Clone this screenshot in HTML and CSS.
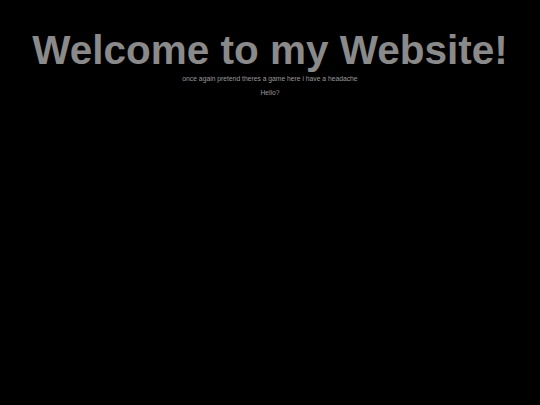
FILE: index.html
```html
<!DOCTYPE html>
<html>
<head>
<meta charset="utf-8">
<link rel="stylesheet" href="styles.css">
</head>
<body>
<main class="page">
  <h1 class="title">Welcome to my Website!</h1>
  <p class="tagline">once again pretend theres a game here i have a headache</p>
  <p class="hello">Hello?</p>
</main>
</body>
</html>
```

FILE: styles.css
```css
html, body {
  margin: 0;
  padding: 0;
  background: #000;
}
.page {
  display: flex;
  flex-direction: column;
  align-items: center;
  padding-top: 27px;
  font-family: "Liberation Sans", Arial, sans-serif;
  color: #8c8c8c;
  text-align: center;
}
.title {
  margin: 0;
  font-size: 40.5px;
  font-weight: bold;
  line-height: 46px;
  color: #8a8a8a;
}
.tagline {
  margin: 1px 0 0;
  font-size: 6.75px;
  line-height: 9px;
  color: #9a9a9a;
}
.hello {
  margin: 5px 0 0;
  font-size: 6.75px;
  line-height: 9px;
  color: #9a9a9a;
}
```
